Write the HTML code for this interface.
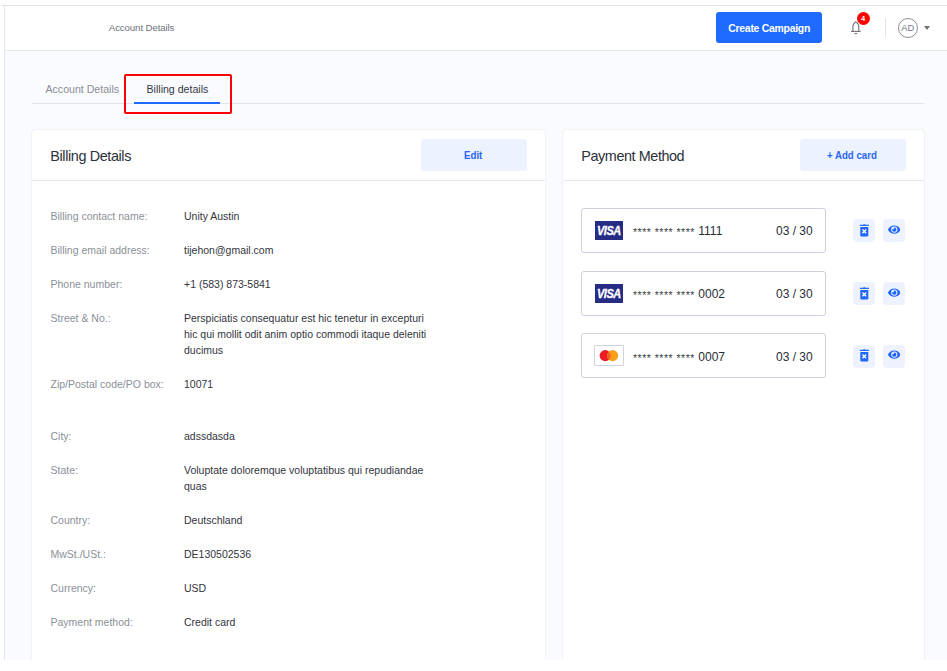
<!DOCTYPE html>
<html>
<head>
<meta charset="utf-8">
<style>
html,body{margin:0;padding:0;}
body{width:947px;height:671px;position:relative;overflow:hidden;background:#fff;font-family:"Liberation Sans",sans-serif;}
.a{position:absolute;}
.t{position:absolute;white-space:nowrap;line-height:1;}
#frameTop{left:2px;top:5px;width:945px;height:1px;background:#dfe1e6;}
#frameLeft{left:4px;top:6px;width:1px;height:654px;background:#e3e5ea;}
#header{left:5px;top:6px;width:942px;height:44px;background:#fff;}
#headerLine{left:5px;top:50px;width:942px;height:1px;background:#e9e9ea;}
#bg{left:5px;top:51px;width:942px;height:609px;background:#fafbfe;}
.btn-primary{background:#1f6bff;border-radius:3px;}
.card{background:#fff;border-radius:3px;box-shadow:0 0 1.5px rgba(20,30,60,0.2);}
.sep{height:1px;background:#e8e9ee;}
.lbtn{background:#ecf2fe;border-radius:3px;}
.label{color:#8b8f98;font-size:10.5px;}
.val{color:#32353d;font-size:10.5px;}
.ccard{border:1px solid #cdd1dc;border-radius:3px;background:#fff;box-sizing:border-box;}
.ibtn{background:#edf2fe;border-radius:4px;}
.num{color:#2a2d35;font-size:12px;}
.ast{font-size:10.5px;letter-spacing:0.5px;position:relative;top:1.2px;color:#3c3f47;}
.visa{width:28px;height:19px;background:#262b84;overflow:hidden;}
.visa span{position:absolute;left:1.6px;top:4.1px;font-size:12.2px;line-height:1;font-weight:bold;font-style:italic;color:#fff;-webkit-text-stroke:0.3px #fff;letter-spacing:-0.5px;transform:scaleX(0.9);transform-origin:0 0;white-space:nowrap;}
.mc{width:28px;height:19px;border:1px solid #cfd3dc;border-radius:1px;background:#fff;}
</style>
</head>
<body>
<div id="frameTop" class="a"></div>
<div id="frameLeft" class="a"></div>
<div id="header" class="a"></div>
<div id="headerLine" class="a"></div>
<div id="bg" class="a"></div>

<!-- header -->
<div class="t" style="left:108.8px;top:23px;font-size:9.7px;letter-spacing:-0.12px;color:#6f737c;">Account Details</div>
<div class="a btn-primary" style="left:716px;top:12px;width:106px;height:31px;"></div>
<div class="t" style="left:728.3px;top:23.6px;font-size:10.4px;letter-spacing:-0.25px;font-weight:bold;color:#fff;">Create Campaign</div>

<!-- bell -->
<svg class="a" style="left:849px;top:19px;" width="14" height="17" viewBox="0 0 14 17">
  <path d="M3.9 12.4 V7.6 C3.9 5.2 5.4 3.8 6.85 2.9 C8.3 3.8 9.8 5.2 9.8 7.6 V12.4" fill="none" stroke="#6c7077" stroke-width="1.1"/>
  <path d="M2 12.4 H11.7" stroke="#6c7077" stroke-width="1.1"/>
  <path d="M5.3 14.6 H8.3" stroke="#6c7077" stroke-width="1"/>
</svg>
<div class="a" style="left:856.6px;top:11.8px;width:13.4px;height:13.4px;border-radius:50%;background:#ff0000;"></div>
<div class="t" style="left:861px;top:15px;font-size:7.5px;font-weight:bold;color:#fff;">4</div>
<div class="a" style="left:885px;top:18px;width:1px;height:19px;background:#e3e4e8;"></div>
<div class="a" style="left:898px;top:17.7px;width:18px;height:18px;border:1px solid #8f9194;border-radius:50%;"></div>
<div class="t" style="left:901.2px;top:24px;font-size:9.3px;color:#767b85;">AD</div>
<svg class="a" style="left:924px;top:26px;" width="6" height="4" viewBox="0 0 6 4"><path d="M0 0 H6 L3 4 Z" fill="#6f7277"/></svg>

<!-- tabs -->
<div class="t" style="left:45.5px;top:84px;font-size:10.6px;color:#8a8e98;">Account Details</div>
<div class="t" style="left:146.5px;top:84px;font-size:10.6px;color:#333845;">Billing details</div>
<div class="a" style="left:32px;top:103px;width:892px;height:1px;background:#e2e3eb;"></div>
<div class="a" style="left:134px;top:102px;width:86px;height:2px;background:#1f6bff;"></div>
<div class="a" style="left:124px;top:74px;width:104px;height:36px;border:2px solid #ff0000;border-radius:2px;"></div>

<!-- left card -->
<div class="a card" style="left:32px;top:130px;width:513px;height:560px;"></div>
<div class="t" style="left:50.3px;top:148.6px;font-size:14.4px;letter-spacing:-0.38px;color:#2b2f38;">Billing Details</div>
<div class="a lbtn" style="left:421px;top:139px;width:106px;height:32px;"></div>
<div class="t" style="left:464.2px;top:149.9px;font-size:10.8px;transform:scaleX(0.9);transform-origin:0 0;font-weight:bold;color:#2a66f6;">Edit</div>
<div class="a sep" style="left:32px;top:180px;width:513px;"></div>

<div class="t label" style="left:50.5px;top:211px;">Billing contact name:</div>
<div class="t val" style="left:184px;top:211px;">Unity Austin</div>
<div class="t label" style="left:50.5px;top:245px;">Billing email address:</div>
<div class="t val" style="left:184px;top:245px;">tijehon@gmail.com</div>
<div class="t label" style="left:50.5px;top:279px;">Phone number:</div>
<div class="t val" style="left:184px;top:279px;">+1 (583) 873-5841</div>
<div class="t label" style="left:50.5px;top:313px;">Street &amp; No.:</div>
<div class="t val" style="left:184px;top:313px;line-height:15.7px;margin-top:-1.7px;">Perspiciatis consequatur est hic tenetur in excepturi<br>hic qui mollit odit anim optio commodi itaque deleniti<br>ducimus</div>
<div class="t label" style="left:50.5px;top:379px;">Zip/Postal code/PO box:</div>
<div class="t val" style="left:184px;top:379px;">10071</div>
<div class="t label" style="left:50.5px;top:431px;">City:</div>
<div class="t val" style="left:184px;top:431px;">adssdasda</div>
<div class="t label" style="left:50.5px;top:465px;">State:</div>
<div class="t val" style="left:184px;top:465px;line-height:15.7px;margin-top:-1.7px;">Voluptate doloremque voluptatibus qui repudiandae<br>quas</div>
<div class="t label" style="left:50.5px;top:514.5px;">Country:</div>
<div class="t val" style="left:184px;top:514.5px;">Deutschland</div>
<div class="t label" style="left:50.5px;top:548.5px;">MwSt./USt.:</div>
<div class="t val" style="left:184px;top:548.5px;">DE130502536</div>
<div class="t label" style="left:50.5px;top:582.5px;">Currency:</div>
<div class="t val" style="left:184px;top:582.5px;">USD</div>
<div class="t label" style="left:50.5px;top:616.5px;">Payment method:</div>
<div class="t val" style="left:184px;top:616.5px;">Credit card</div>

<!-- right card -->
<div class="a card" style="left:563px;top:130px;width:361px;height:560px;"></div>
<div class="t" style="left:581.3px;top:148.6px;font-size:14.4px;letter-spacing:-0.42px;color:#2b2f38;">Payment Method</div>
<div class="a lbtn" style="left:800px;top:139px;width:106px;height:32px;"></div>
<div class="t" style="left:827.4px;top:149.9px;font-size:10.8px;transform:scaleX(0.895);transform-origin:0 0;font-weight:bold;color:#2a66f6;">+ Add card</div>
<div class="a sep" style="left:563px;top:180px;width:361px;"></div>

<!-- payment cards -->
<div class="a ccard" style="left:581px;top:208px;width:245px;height:45px;"></div>
<div class="a ccard" style="left:581px;top:271px;width:245px;height:45px;"></div>
<div class="a ccard" style="left:581px;top:333px;width:245px;height:45px;"></div>

<div class="a visa" style="left:595px;top:221px;"><span>VISA</span></div>
<div class="a visa" style="left:595px;top:284px;"><span>VISA</span></div>
<div class="a mc" style="left:594px;top:345px;">
  <svg width="30" height="21" viewBox="0 0 30 21" style="position:absolute;left:-1px;top:-1px;">
    <circle cx="11.2" cy="10.6" r="5.6" fill="#eb1c26"/>
    <circle cx="18.6" cy="10.6" r="5.6" fill="#f79e1b"/>
    <path d="M14.9 6.4 A5.6 5.6 0 0 1 14.9 14.8 A5.6 5.6 0 0 1 14.9 6.4 Z" fill="#f06322"/>
  </svg>
</div>

<div class="t num" style="left:633px;top:225px;"><span class="ast">****&nbsp;****&nbsp;****&nbsp;</span>1111</div>
<div class="t num" style="left:776px;top:225px;">03 / 30</div>
<div class="t num" style="left:633px;top:288px;"><span class="ast">****&nbsp;****&nbsp;****&nbsp;</span>0002</div>
<div class="t num" style="left:776px;top:288px;">03 / 30</div>
<div class="t num" style="left:633px;top:350.5px;"><span class="ast">****&nbsp;****&nbsp;****&nbsp;</span>0007</div>
<div class="t num" style="left:776px;top:350.5px;">03 / 30</div>

<!-- action buttons -->
<div class="a ibtn" style="left:853px;top:219px;width:22px;height:23px;"></div>
<div class="a ibtn" style="left:883px;top:219px;width:22px;height:23px;"></div>
<div class="a ibtn" style="left:853px;top:282px;width:22px;height:23px;"></div>
<div class="a ibtn" style="left:883px;top:282px;width:22px;height:23px;"></div>
<div class="a ibtn" style="left:853px;top:345px;width:22px;height:23px;"></div>
<div class="a ibtn" style="left:883px;top:345px;width:22px;height:23px;"></div>


<svg class="a" style="left:858px;top:223px;" width="13" height="14" viewBox="0 0 13 14"><path d="M1.8 2.35 H10.9" stroke="#1f66ff" stroke-width="1.2"/><path d="M5.2 2 Q6.35 1.1 7.5 2" stroke="#1f66ff" stroke-width="0.9" fill="none"/><path d="M2.3 4 H10.3 V12.2 Q10.3 13.4 9.1 13.4 H3.5 Q2.3 13.4 2.3 12.2 Z" fill="#1f66ff"/><path d="M4.45 6.6 L8.15 10.3 M8.15 6.6 L4.45 10.3" stroke="#fff" stroke-width="1.35"/></svg>
<svg class="a" style="left:887.85px;top:224.15px;" width="12.6" height="11.2" viewBox="0 0 576 512"><path fill="#1f66ff" d="M572.52 241.4C518.29 135.59 410.93 64 288 64S57.68 135.64 3.48 241.41a32.35 32.35 0 0 0 0 29.19C57.71 376.41 165.07 448 288 448s230.32-71.64 284.52-177.41a32.35 32.35 0 0 0 0-29.19zM288 400a144 144 0 1 1 144-144 143.93 143.93 0 0 1-144 144zm0-240a95.31 95.31 0 0 0-25.31 3.79 47.85 47.85 0 0 1-66.9 66.9A95.78 95.78 0 1 0 288 160z"/></svg>
<svg class="a" style="left:858px;top:286px;" width="13" height="14" viewBox="0 0 13 14"><path d="M1.8 2.35 H10.9" stroke="#1f66ff" stroke-width="1.2"/><path d="M5.2 2 Q6.35 1.1 7.5 2" stroke="#1f66ff" stroke-width="0.9" fill="none"/><path d="M2.3 4 H10.3 V12.2 Q10.3 13.4 9.1 13.4 H3.5 Q2.3 13.4 2.3 12.2 Z" fill="#1f66ff"/><path d="M4.45 6.6 L8.15 10.3 M8.15 6.6 L4.45 10.3" stroke="#fff" stroke-width="1.35"/></svg>
<svg class="a" style="left:887.85px;top:287.2px;" width="12.6" height="11.2" viewBox="0 0 576 512"><path fill="#1f66ff" d="M572.52 241.4C518.29 135.59 410.93 64 288 64S57.68 135.64 3.48 241.41a32.35 32.35 0 0 0 0 29.19C57.71 376.41 165.07 448 288 448s230.32-71.64 284.52-177.41a32.35 32.35 0 0 0 0-29.19zM288 400a144 144 0 1 1 144-144 143.93 143.93 0 0 1-144 144zm0-240a95.31 95.31 0 0 0-25.31 3.79 47.85 47.85 0 0 1-66.9 66.9A95.78 95.78 0 1 0 288 160z"/></svg>
<svg class="a" style="left:858px;top:348px;" width="13" height="14" viewBox="0 0 13 14"><path d="M1.8 2.35 H10.9" stroke="#1f66ff" stroke-width="1.2"/><path d="M5.2 2 Q6.35 1.1 7.5 2" stroke="#1f66ff" stroke-width="0.9" fill="none"/><path d="M2.3 4 H10.3 V12.2 Q10.3 13.4 9.1 13.4 H3.5 Q2.3 13.4 2.3 12.2 Z" fill="#1f66ff"/><path d="M4.45 6.6 L8.15 10.3 M8.15 6.6 L4.45 10.3" stroke="#fff" stroke-width="1.35"/></svg>
<svg class="a" style="left:887.85px;top:349.25px;" width="12.6" height="11.2" viewBox="0 0 576 512"><path fill="#1f66ff" d="M572.52 241.4C518.29 135.59 410.93 64 288 64S57.68 135.64 3.48 241.41a32.35 32.35 0 0 0 0 29.19C57.71 376.41 165.07 448 288 448s230.32-71.64 284.52-177.41a32.35 32.35 0 0 0 0-29.19zM288 400a144 144 0 1 1 144-144 143.93 143.93 0 0 1-144 144zm0-240a95.31 95.31 0 0 0-25.31 3.79 47.85 47.85 0 0 1-66.9 66.9A95.78 95.78 0 1 0 288 160z"/></svg>
<!-- bottom white strip -->
<div class="a" style="left:0;top:660px;width:947px;height:11px;background:#fff;"></div>
</body>
</html>
